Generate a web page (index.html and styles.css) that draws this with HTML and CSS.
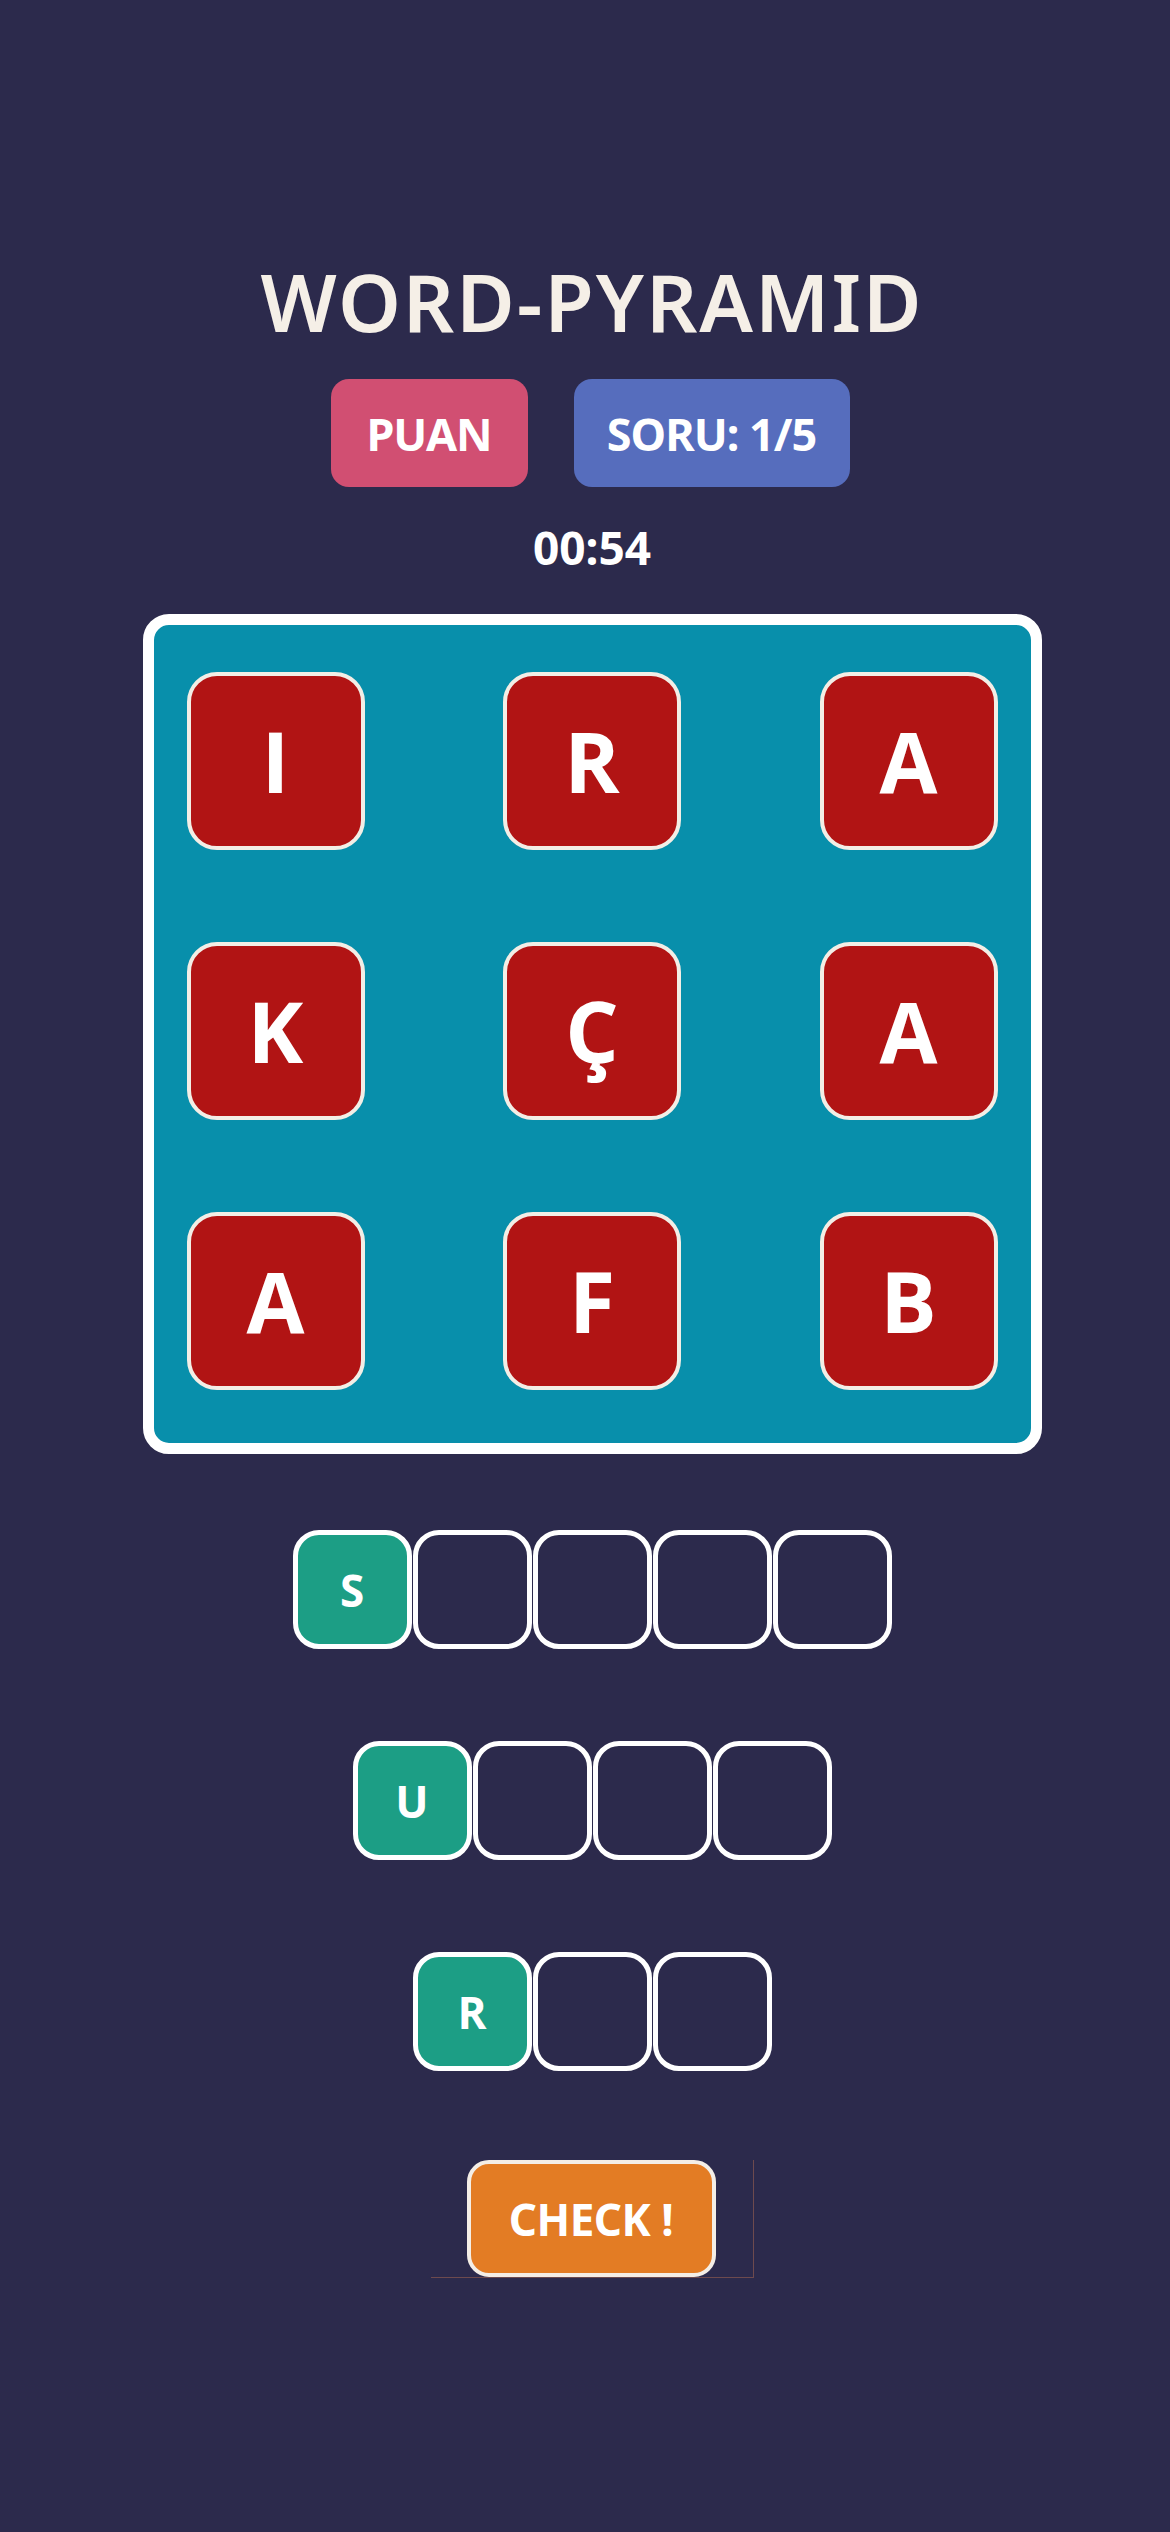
FILE: index.html
```html
<!DOCTYPE html>
<html lang="tr">
<head>
<meta charset="utf-8">
<title>Word Pyramid</title>
<link rel="stylesheet" href="styles.css">
</head>
<body>
<main class="app">
  <h1 class="title">WORD-PYRAMID</h1>
  <div class="stats">
    <div class="stat stat-score">PUAN</div>
    <div class="stat stat-question">SORU: 1/5</div>
  </div>
  <div class="timer">00:54</div>

  <section class="board">
    <div class="tile">I</div>
    <div class="tile">R</div>
    <div class="tile">A</div>
    <div class="tile">K</div>
    <div class="tile">Ç</div>
    <div class="tile">A</div>
    <div class="tile">A</div>
    <div class="tile">F</div>
    <div class="tile">B</div>
  </section>

  <section class="answers">
    <div class="answer-row">
      <div class="cell cell-filled">S</div>
      <div class="cell"></div>
      <div class="cell"></div>
      <div class="cell"></div>
      <div class="cell"></div>
    </div>
    <div class="answer-row">
      <div class="cell cell-filled">U</div>
      <div class="cell"></div>
      <div class="cell"></div>
      <div class="cell"></div>
    </div>
    <div class="answer-row">
      <div class="cell cell-filled">R</div>
      <div class="cell"></div>
      <div class="cell"></div>
    </div>
  </section>

  <div class="check-wrap">
    <button class="check" type="button">CHECK !</button>
  </div>
</main>
</body>
</html>
```

FILE: styles.css
```css
html, body {
  margin: 0;
  padding: 0;
  background: #2c2a4c;
}

body {
  min-height: 2532px;
  font-family: "Noto Sans", "Open Sans", sans-serif;
}

.app {
  box-sizing: border-box;
  width: 1170px;
  padding: 261px 0 0 14px;
  display: flex;
  flex-direction: column;
  align-items: center;
}

.title {
  margin: 0;
  font-size: 80px;
  line-height: 80px;
  font-weight: 600;
  color: #f5efe7;
  letter-spacing: 2px;
}

.stats {
  margin-top: 38px;
  display: flex;
  gap: 46px;
  margin-left: -4px;
}

.stat {
  height: 108px;
  border-radius: 18px;
  display: flex;
  align-items: center;
  justify-content: center;
  color: #ffffff;
  font-size: 45px;
  font-weight: 700;
  letter-spacing: -1px;
}

.stat-score {
  width: 197px;
  background: #d14f72;
}

.stat-question {
  width: 276px;
  background: #566dbd;
}

.timer {
  margin-top: 38px;
  font-size: 46px;
  line-height: 45px;
  font-weight: 700;
  color: #ffffff;
  letter-spacing: 0;
}

.board {
  box-sizing: border-box;
  margin-top: 44px;
  width: 899px;
  border: 11px solid #ffffff;
  border-radius: 26px;
  background: #088fab;
  padding: 47px 33px 53px;
  display: grid;
  grid-template-columns: repeat(3, 178px);
  justify-content: space-between;
  row-gap: 92px;
}

.tile {
  box-sizing: border-box;
  width: 178px;
  height: 178px;
  border: 4px solid #f3eee6;
  border-radius: 30px;
  background: #b11414;
  display: flex;
  align-items: center;
  justify-content: center;
  color: #ffffff;
  font-family: "Open Sans", "Noto Sans", sans-serif;
  font-weight: 700;
  font-size: 84px;
  line-height: 1;
}

.answers {
  margin-top: 76px;
  display: flex;
  flex-direction: column;
  align-items: center;
  gap: 92px;
}

.answer-row {
  display: flex;
  gap: 1px;
}

.cell {
  box-sizing: border-box;
  width: 119px;
  height: 119px;
  border: 5px solid #ffffff;
  border-radius: 26px;
  display: flex;
  align-items: center;
  justify-content: center;
  color: #ffffff;
  font-family: "Open Sans", "Noto Sans", sans-serif;
  font-weight: 700;
  font-size: 44px;
  line-height: 1;
}

.cell-filled {
  background: #1c9e85;
}

.check-wrap {
  box-sizing: border-box;
  margin-top: 89px;
  width: 323px;
  height: 118px;
  border-right: 1px solid #6e4a4e;
  border-bottom: 1px solid #6e4a4e;
  display: flex;
  justify-content: center;
  align-items: flex-start;
  padding-right: 1px;
}

.check {
  box-sizing: border-box;
  width: 249px;
  height: 117px;
  margin: 0;
  border: 4px solid #f4eee6;
  border-radius: 22px;
  background: #e37c24;
  color: #ffffff;
  font-family: "Noto Sans", "Open Sans", sans-serif;
  font-weight: 700;
  font-size: 44px;
  letter-spacing: -0.5px;
  padding: 0;
  cursor: pointer;
}
```
